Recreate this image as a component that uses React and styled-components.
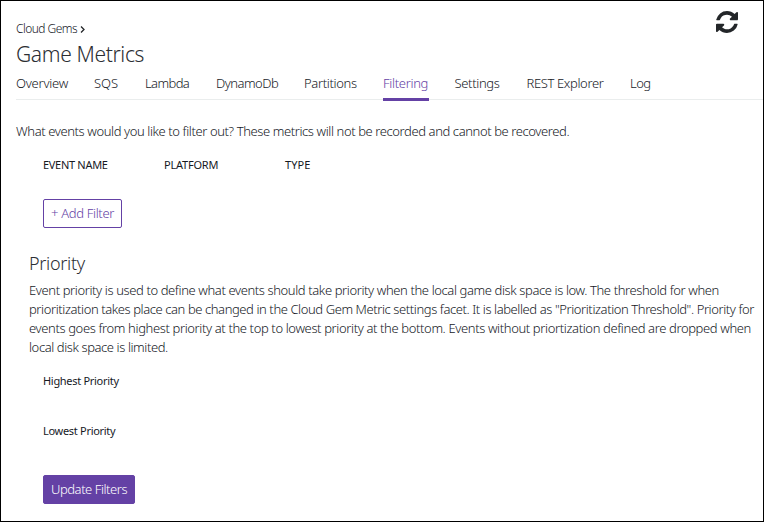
import React from "react";
import styled, { createGlobalStyle } from "styled-components";

const GlobalStyle = createGlobalStyle`
  *, *::before, *::after { box-sizing: border-box; }
  body { margin: 0; background: #fff; }
`;

const Frame = styled.div`
  width: 764px;
  height: 522px;
  border: 1px solid #000;
  padding: 10px 0 0 15px;
  overflow: hidden;
  background: #fff;
  color: #16191f;
  font-family: "Noto Sans", "Open Sans", sans-serif;
  font-weight: 300;
  font-size: 13px;
`;

const Header = styled.header`
  display: flex;
  justify-content: space-between;
  height: 57px;
  padding-right: 25px;
`;

const Heading = styled.div`
  padding-top: 9px;
`;

const Breadcrumb = styled.nav`
  display: flex;
  align-items: center;
  gap: 3px;
  height: 18px;
  font-size: 12px;
  line-height: 18px;
  letter-spacing: -0.55px;
`;

const Chevron = styled.svg`
  width: 5px;
  height: 7px;
  margin-top: 1px;
`;

const Title = styled.h1`
  margin: 1px 0 0;
  font-size: 21px;
  font-weight: 300;
  line-height: 30px;
  letter-spacing: -0.36px;
  color: #2b2e33;
`;

const RefreshButton = styled.button`
  width: 22px;
  height: 22px;
  padding: 0;
  border: 0;
  background: none;
  color: #232629;
  svg { display: block; width: 22px; height: 22px; }
`;

const Tabs = styled.nav`
  display: flex;
  gap: 26px;
  height: 32px;
  border-bottom: 1px solid #eaeded;
`;

const Tab = styled.a`
  flex: none;
  width: ${(p) => p.$width}px;
  height: 33px;
  padding-top: 5px;
  line-height: 20px;
  white-space: nowrap;
  letter-spacing: ${(p) => p.$tracking}px;
  color: ${(p) => (p.$active ? "#6441a5" : "inherit")};
  border-bottom: 3px solid ${(p) => (p.$active ? "#6441a5" : "transparent")};
`;

const Intro = styled.p`
  margin: 21px 0 0;
  line-height: 20px;
  white-space: nowrap;
  letter-spacing: -0.402px;
`;

const FilterHeader = styled.div`
  display: grid;
  grid-template-columns: repeat(3, 121px);
  margin: 15px 0 0 27px;
  font-size: 11px;
  line-height: 18px;
`;

const ColumnName = styled.span`
  font-weight: 400;
  letter-spacing: ${(p) => p.$tracking}px;
`;

const Button = styled.button`
  display: block;
  width: ${(p) => p.$width}px;
  height: 29px;
  margin: ${(p) => p.$top}px 0 0 27px;
  padding: 0 0 0 7px;
  border: 1px solid #6441a5;
  border-radius: 2px;
  background: ${(p) => (p.$primary ? "#6441a5" : "#fff")};
  color: ${(p) => (p.$primary ? "#fff" : "#6441a5")};
  font: inherit;
  line-height: 27px;
  text-align: left;
  white-space: nowrap;
  letter-spacing: ${(p) => (p.$primary ? -0.45 : -0.33)}px;
`;

const SectionTitle = styled.h2`
  margin: 23px 0 0 13px;
  font-size: 18px;
  font-weight: 300;
  line-height: 24px;
  letter-spacing: -0.3px;
  color: #2b2e33;
`;

const Description = styled.p`
  margin: 6px 0 0 13px;
  line-height: 19px;
`;

const Line = styled.span`
  display: block;
  white-space: nowrap;
  letter-spacing: ${(p) => p.$tracking}px;
`;

const PriorityLabel = styled.div`
  margin: ${(p) => p.$top}px 0 0 27px;
  font-size: 11px;
  font-weight: 400;
  line-height: 18px;
  letter-spacing: -0.3px;
`;

const tabs = [
  { label: "Overview", width: 52, tracking: -0.25 },
  { label: "SQS", width: 25, tracking: -0.06 },
  { label: "Lambda", width: 45, tracking: -0.6 },
  { label: "DynamoDb", width: 62, tracking: -0.52 },
  { label: "Partitions", width: 53, tracking: -0.34 },
  { label: "Filtering", width: 45.5, tracking: -0.32, active: true },
  { label: "Settings", width: 46, tracking: -0.34 },
  { label: "REST Explorer", width: 77.5, tracking: -0.37 },
  { label: "Log", width: 20, tracking: -0.5 },
];

const description = [
  ["Event priority is used to define what events should take priority when the local game disk space is low. The threshold for when", -0.39],
  ['prioritization takes place can be changed in the Cloud Gem Metric settings facet. It is labelled as "Prioritization Threshold". Priority for', -0.414],
  ["events goes from highest priority at the top to lowest priority at the bottom. Events without priortization defined are dropped when", -0.376],
  ["local disk space is limited.", -0.41],
];

function RefreshIcon() {
  return (
    <svg viewBox="0 0 1536 1536" fill="currentColor" aria-hidden="true">
      <path d="M1511 928q0 5-1 7-64 268-268 434.500T764 1536q-146 0-282.500-55T238 1324l-129 129q-19 19-45 19t-45-19-19-45V960q0-26 19-45t45-19h448q26 0 45 19t19 45-19 45l-137 137q71 66 161 102t187 36q134 0 250-65t186-179q11-17 53-117 8-23 30-23h192q13 0 22.500 9.500t9.500 22.500zM1536 128v448q0 26-19 45t-45 19h-448q-26 0-45-19t-19-45 19-45l138-138Q969 256 768 256q-134 0-250 65T332 500q-11 17-53 117-8 23-30 23H50q-13 0-22.500-9.500T18 608v-7q65-268 270-434.500T768 0q146 0 284 55.500T1297 212l130-129q19-19 45-19t45 19 19 45z" />
    </svg>
  );
}

export default function App() {
  return (
    <>
      <GlobalStyle />
      <Frame>
        <Header>
          <Heading>
            <Breadcrumb>
              <span>Cloud Gems</span>
              <Chevron viewBox="0 0 5 7" fill="none" stroke="#232629" strokeWidth="1.3">
                <path d="M1 .5 4 3.500 1 6.500" />
              </Chevron>
            </Breadcrumb>
            <Title>Game Metrics</Title>
          </Heading>
          <RefreshButton aria-label="Refresh">
            <RefreshIcon />
          </RefreshButton>
        </Header>
        <Tabs>
          {tabs.map((t) => (
            <Tab key={t.label} $width={t.width} $tracking={t.tracking} $active={t.active}>
              {t.label}
            </Tab>
          ))}
        </Tabs>
        <Intro>
          What events would you like to filter out? These metrics will not be recorded and cannot be recovered.
        </Intro>
        <FilterHeader>
          <ColumnName $tracking={-0.3}>EVENT NAME</ColumnName>
          <ColumnName $tracking={-0.22}>PLATFORM</ColumnName>
          <ColumnName $tracking={0.05}>TYPE</ColumnName>
        </FilterHeader>
        <Button $width={79} $top={25}>+ Add Filter</Button>
        <SectionTitle>Priority</SectionTitle>
        <Description>
          {description.map(([text, tracking]) => (
            <Line key={text} $tracking={tracking}>{text}</Line>
          ))}
        </Description>
        <PriorityLabel $top={15}>Highest Priority</PriorityLabel>
        <PriorityLabel $top={32}>Lowest Priority</PriorityLabel>
        <Button $primary $width={92} $top={35}>Update Filters</Button>
      </Frame>
    </>
  );
}
